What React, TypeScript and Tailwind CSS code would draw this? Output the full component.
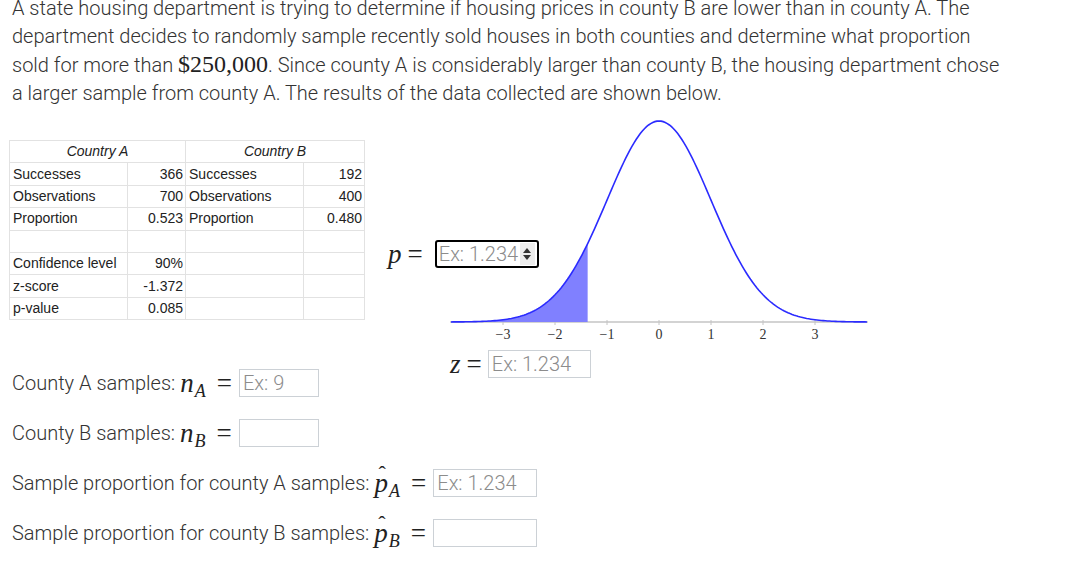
import React from "react";

const CX = 218;
const UNIT = 52;
const AXIS_Y = 206;
const PEAK = 201;
const Z_CUT = -1.372;

function yAt(z: number) {
  return AXIS_Y - PEAK * Math.exp(-(z * z) / 2);
}

function curvePath(from: number, to: number) {
  const pts: string[] = [];
  const steps = Math.round((to - from) / 0.04);
  for (let i = 0; i <= steps; i++) {
    const z = from + ((to - from) * i) / steps;
    pts.push(`${(CX + z * UNIT).toFixed(2)},${yAt(z).toFixed(2)}`);
  }
  return pts;
}

const serif = "font-['Liberation_Serif',serif]";

function NormalChart() {
  const line = curvePath(-4, 4);
  const fill = curvePath(-4, Z_CUT);
  const cutX = CX + Z_CUT * UNIT;
  const fillD = `M${fill.join(" L")} L${cutX},${AXIS_Y} L${CX - 4 * UNIT},${AXIS_Y} Z`;
  return (
    <svg width={430} height={225} className="block">
      <line x1={9} x2={427} y1={AXIS_Y} y2={AXIS_Y} stroke="#c4c4c4" strokeWidth={1.5} />
      {[-3, -2, -1, 0, 1, 2, 3].map((t) => (
        <g key={t}>
          <line x1={CX + t * UNIT} x2={CX + t * UNIT} y1={AXIS_Y - 2} y2={AXIS_Y + 3} stroke="#c4c4c4" strokeWidth={1} />
          <text
            x={CX + t * UNIT}
            y={AXIS_Y + 17}
            textAnchor="middle"
            fontSize={14}
            fill="#333"
            fontFamily="'Liberation Serif', serif"
          >
            {t < 0 ? `\u2212${-t}` : t}
          </text>
        </g>
      ))}
      <path d={fillD} fill="#8080ff" />
      <path d={`M${line.join(" L")}`} fill="none" stroke="#2b2bff" strokeWidth={1.6} />
    </svg>
  );
}

function Box({ placeholder, w }: { placeholder?: string; w: string }) {
  return (
    <div className={`${w} h-[28px] border border-[#ccd1d6] flex items-center pl-[3px] text-[#8c8c8c] text-[20px]`}>
      {placeholder}
    </div>
  );
}

function Eq({ className }: { className: string }) {
  return <span className={`${serif} text-[27px] text-[#222] leading-none ${className}`}>=</span>;
}

function Sym({ base, sub, hat }: { base: string; sub: string; hat?: boolean }) {
  return (
    <span className={`${serif} italic inline-flex items-baseline text-[#222]`}>
      <span className="relative text-[27px] leading-none">
        {base}
        {hat && <span className="absolute left-[4px] top-[-7px] text-[22px] not-italic leading-none">ˆ</span>}
      </span>
      <span className="text-[18px] leading-none translate-y-[5px] ml-[1px]">{sub}</span>
    </span>
  );
}

function Question({ label, base, sub, hat, box }: { label: string; base: string; sub: string; hat?: boolean; box: React.ReactNode }) {
  return (
    <div className="h-[28px] flex items-center">
      <span className="mr-[5px]">{label}</span>
      <Sym base={base} sub={sub} hat={hat} />
      <Eq className="ml-[11px] mr-[7px]" />
      {box}
    </div>
  );
}

const rows = [
  ["Successes", "366", "Successes", "192"],
  ["Observations", "700", "Observations", "400"],
  ["Proportion", "0.523", "Proportion", "0.480"],
  ["", "", "", ""],
  ["Confidence level", "90%", "", ""],
  ["z-score", "-1.372", "", ""],
  ["p-value", "0.085", "", ""],
];

export default function App() {
  return (
    <div className="w-[1088px] h-[561px] overflow-hidden bg-white font-['Roboto',sans-serif] font-light text-[#333]">
      <p className="mt-[-6px] ml-[12px] text-[20px] leading-[28px] whitespace-nowrap">
        A state housing department is trying to determine if housing prices in county B are lower than in county A. The
        <br />
        department decides to randomly sample recently sold houses in both counties and determine what proportion
        <br />
        sold for more than <span className={`${serif} font-normal text-[24px] text-[#222]`}>$250,000</span>.
        Since county A is considerably larger than county B, the housing department chose
        <br />
        a larger sample from county A. The results of the data collected are shown below.
      </p>

      <div className="flex items-start mt-[4px] pl-[9px]">
        <table className="mt-[29px] border-collapse font-['Liberation_Sans',Arial,sans-serif] font-normal text-[14px] text-[#222] table-fixed w-[355px]">
          <colgroup>
            <col className="w-[118px]" />
            <col className="w-[58px]" />
            <col className="w-[118px]" />
            <col className="w-[61px]" />
          </colgroup>
          <tbody>
            <tr className="h-[22.4px]">
              <td colSpan={2} className="border border-[#e2e2e2] text-center italic p-0">Country A</td>
              <td colSpan={2} className="border border-[#e2e2e2] text-center italic p-0">Country B</td>
            </tr>
            {rows.map((r, i) => (
              <tr key={i} className="h-[22.4px]">
                <td className="border border-[#e2e2e2] px-[3px] py-0 whitespace-nowrap">{r[0]}</td>
                <td className="border border-[#e2e2e2] px-[2px] py-0 text-right">{r[1]}</td>
                <td className="border border-[#e2e2e2] px-[3px] py-0 whitespace-nowrap">{r[2]}</td>
                <td className="border border-[#e2e2e2] px-[2px] py-0 text-right">{r[3]}</td>
              </tr>
            ))}
          </tbody>
        </table>

        <div className="relative ml-[16px] w-[490px] -mb-[9px]">
          <div className="ml-[60px] mt-[5px]">
            <NormalChart />
          </div>
          <div className="absolute left-[7px] top-[129px] h-[28px] flex items-center">
            <span className={`${serif} italic text-[27px] text-[#222] leading-none`}>p</span>
            <Eq className="ml-[6px] mr-[12px]" />
            <div className="w-[104px] h-[28px] border-2 border-black rounded-[3px] flex items-center pl-[2px] text-[#8c8c8c] text-[20px]">
              <span className="flex-1 whitespace-nowrap">Ex: 1.234</span>
              <span className="w-[15px] h-[22px] bg-[#ececec] mr-[2px] flex flex-col items-center justify-center gap-[2px]">
                <span className="w-0 h-0 border-l-[4px] border-r-[4px] border-b-[5px] border-l-transparent border-r-transparent border-b-[#333]" />
                <span className="w-0 h-0 border-l-[4px] border-r-[4px] border-t-[5px] border-l-transparent border-r-transparent border-t-[#333]" />
              </span>
            </div>
          </div>
          <div className="mt-[9px] ml-[69px] h-[28px] flex items-center">
            <span className={`${serif} italic text-[27px] text-[#222] leading-none`}>z</span>
            <Eq className="ml-[6px] mr-[6px]" />
            <Box w="w-[103px]" placeholder="Ex: 1.234" />
          </div>
        </div>
      </div>

      <div className="pl-[12px] flex flex-col gap-[22px] text-[20px]">
        <Question label="County A samples:" base="n" sub="A" box={<Box w="w-[80px]" placeholder="Ex: 9" />} />
        <Question label="County B samples:" base="n" sub="B" box={<Box w="w-[80px]" />} />
        <Question label="Sample proportion for county A samples:" base="p" sub="A" hat box={<Box w="w-[104px]" placeholder="Ex: 1.234" />} />
        <Question label="Sample proportion for county B samples:" base="p" sub="B" hat box={<Box w="w-[104px]" />} />
      </div>
    </div>
  );
}
